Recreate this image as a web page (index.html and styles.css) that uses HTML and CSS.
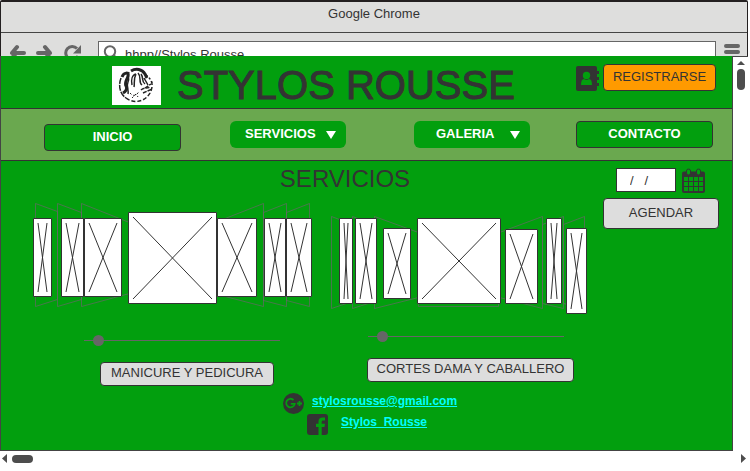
FILE: index.html
```html
<!DOCTYPE html>
<html lang="es">
<head>
<meta charset="utf-8">
<title>Stylos Rousse</title>
<link rel="stylesheet" href="styles.css">
</head>
<body>
<div class="window">
  <div class="chrome">
    <div class="titlebar">Google Chrome</div>
    <div class="toolbar">
      <button class="tool" aria-label="Atrás"><svg width="18" height="18" viewBox="0 0 18 18"><path d="M8 3 3 9l5 6M3 9h12" class="arrow"/></svg></button>
      <button class="tool" aria-label="Adelante"><svg width="18" height="18" viewBox="0 0 18 18"><path d="m10 3 5 6-5 6M15 9H3" class="arrow"/></svg></button>
      <button class="tool reload" aria-label="Recargar"><svg width="18" height="18" viewBox="0 0 18 18"><path d="M13 4.500A6.500 6.500 0 1 0 14 12" class="ring"/><path d="M17 1v8.500H9z" fill="#666"/></svg></button>
      <label class="address">
        <svg width="16" height="18" viewBox="0 0 16 18"><circle cx="7" cy="6.500" r="5.200" fill="none" stroke="#666" stroke-width="2"/><path d="m10.500 10.500 4 5" stroke="#666" stroke-width="3"/></svg>
        <input type="text" value="hhpp//Stylos Rousse" aria-label="Dirección">
      </label>
      <button class="tool menu" aria-label="Menú"><svg width="16" height="18" viewBox="0 0 16 18"><path d="M2 3h12M2 9h12M2 15h12" class="arrow"/></svg></button>
    </div>
  </div>

  <div class="viewport">
    <div class="page">
      <header class="header">
        <svg class="logo" width="49" height="39" viewBox="0 0 49 39" aria-hidden="true">
          <rect width="49" height="39" fill="#fff"/>
          <g fill="none" stroke="#222" stroke-width="1.500">
            <path d="M19 5c5-3 11-2 14 3l2 4" stroke-width="3"/>
            <path d="M10 11c2-5 7-5 6-1s-4 7-2 10-1 6-3 7" stroke-width="3"/>
            <path d="M17 6c-2 4 1 6-1 10s1 8 0 12M20 19c-1-5 0-10 4-11M24 8c-3 6-1 9-2 13M26 7c4 4 0 9 4 12M29 8c3 4 0 7 4 10M32 12l4 7"/>
            <path d="M9 12c-3 8-1 16 5 20" stroke-dasharray="6 1"/>
            <path d="M14 32c8 6 19 4 24-5 2-4 3-8 1-13" stroke-dasharray="4 2"/>
            <path d="M34 9c3 2 5 5 6 8" stroke-dasharray="2 2"/>
            <path d="M29 24c3-3 6-1 9-3M31 27l9-4M33 22l6-4" stroke-dasharray="4 1"/>
            <path d="M18 27c4 5 8 1 9-2M20 32l4-4 2 3" stroke-width="1" stroke-dasharray="2 2"/>
          </g>
        </svg>
        <h1>STYLOS ROUSSE</h1>
        <svg class="contact-icon" width="23" height="25" viewBox="0 0 23 25" aria-hidden="true">
          <rect width="21" height="25" rx="2" fill="#333"/>
          <path d="M20 5h3v3h-3zm0 6h3v3h-3zm0 6h3v3h-3z" fill="#333"/>
          <circle cx="10.500" cy="9.500" r="3.700" fill="#029f0e"/>
          <path d="M5 19c0-4 1-6 3-6q2.500 2 5 0c2 0 3 2 3 6z" fill="#029f0e"/>
        </svg>
        <button class="btn register">REGISTRARSE</button>
      </header>

      <nav class="nav">
        <a class="nav-item low" href="#">INICIO</a>
        <span class="drop"><select aria-label="Servicios"><option>SERVICIOS</option></select></span>
        <span class="drop second"><select aria-label="Galeria"><option>GALERIA</option></select></span>
        <a class="nav-item" href="#">CONTACTO</a>
      </nav>

      <main class="main">
        <h2>SERVICIOS</h2>
        <section class="service">
          <svg width="280" height="106" viewBox="0 0 280 106" role="img" aria-label="Manicure y pedicura">
            <path class="ghost" d="M2.500 1.500 24.500 9.500V97.500L2.500 104.500zM24.500 1.500 48.500 10.500V97.500L24.500 104.500zM48.500 1.500 96.500 20.500V91.500L48.500 104.500zM184.500 19.500 230.500 1.500V104.500L184.500 92.500zM230.500 10.500 253.500 1.500V104.500L230.500 98.500zM253.500 10.500 276.500 1.500V104.500L253.500 98.500z"/>
            <path class="frame" d="M.5 16.500h18v78h-18zM28.500 16.500h22v78h-22zM51.500 16.500h37v78h-37zM184.500 16.500h39v78h-39zM231.500 16.500h21v78h-21zM253.500 16.500h25v78h-25z"/>
            <path class="frame" d="M95.500 10.500h88v91h-88z"/>
            <path class="cross" d="M5 21l9 69m0-69L5 90M33 21l13 69m0-69L33 90M56 21l28 69m0-69L56 90M100 15l79 82m0-82-79 82M189 21l30 69m0-69-30 69M236 21l12 69m0-69-12 69M258 21l16 69m0-69-16 69"/>
          </svg>
          <input class="slider" type="range" min="0" max="100" value="5" aria-label="Manicure y pedicura">
          <button class="btn light manicure">MANICURE Y PEDICURA</button>
        </section>
        <section class="service cuts">
          <svg width="257" height="114" viewBox="0 0 257 114" role="img" aria-label="Cortes dama y caballero">
            <path class="ghost" d="M.5 14.500 21.500 22.500V99.500L.5 106.500zM21.500 14.500 43.500 22.500V99.500L21.500 106.500zM43.500 14.500 87.500 30.500V95.500L43.500 106.500zM87.500 20.500h80v84h-80zM168.500 30.500 211.500 14.500V106.500L168.500 95.500zM211.500 22.500 232.500 14.500V106.500L211.500 101.500zM232.500 22.500 253.500 14.500V106.500L232.500 101.500z"/>
            <path class="frame" d="M8.500 16.500h13v85h-13zM24.500 16.500h21v85h-21zM52.500 26.500h27v70h-27zM86.500 16.500h83v85h-83zM174.500 27.500h32v74h-32zM215.500 16.500h15v85h-15zM235.500 26.500h20v85h-20z"/>
            <path class="cross" d="M13 21l4 76m0-76-4 76M29 21l12 76m0-76L29 97M57 31l18 61m0-61L57 92M91 21l74 76m0-76L91 97M179 32l23 65m0-65-23 65M220 21l6 76m0-76-6 76M240 31l11 76m0-76-11 76"/>
          </svg>
          <input class="slider" type="range" min="0" max="100" value="5" aria-label="Cortes dama y caballero">
          <button class="btn light haircut">CORTES DAMA Y CABALLERO</button>
        </section>
        <form class="booking">
          <div class="date">
            <input type="text" value="/&nbsp;&nbsp;&nbsp;/" aria-label="Fecha">
            <svg width="23" height="25" viewBox="0 0 23 25" aria-hidden="true">
              <rect x="1" y="4.500" width="21" height="19.500" rx="1" fill="none" stroke="#333" stroke-width="2"/>
              <path d="M1 4h21v5H1z" fill="#333"/>
              <path d="M1 13.500h21M1 18.500h21M6.500 9v15M11.500 9v15M16.500 9v15" stroke="#333"/>
              <rect x="4.500" y="1" width="4" height="6" rx="2" fill="#029f0e" stroke="#333"/>
              <rect x="14.500" y="1" width="4" height="6" rx="2" fill="#029f0e" stroke="#333"/>
            </svg>
          </div>
          <button class="btn light schedule" type="button">AGENDAR</button>
        </form>
      </main>

      <footer class="footer">
        <div class="contact mail">
          <svg width="21" height="21" viewBox="0 0 21 21" aria-hidden="true"><circle cx="10.500" cy="10.500" r="10.500" fill="#333"/><path d="M10.500 7A4.300 4.300 0 1 0 11.700 10.800H7.800M14 10.500h5M16.500 8v5" fill="none" stroke="#029f0e" stroke-width="1.800"/></svg>
          <a href="#">stylosrousse@gmail.com</a>
        </div>
        <div class="contact social">
          <svg width="21" height="21" viewBox="0 0 21 21" aria-hidden="true"><rect width="21" height="21" rx="3" fill="#333"/><path d="M11.500 21v-8H9v-3.200h2.500V7.500c0-2.600 1.500-4 4-4H18v3h-1.700c-1.300 0-1.600.6-1.600 1.600v1.700H18l-.5 3.200h-2.800v8z" fill="#029f0e"/></svg>
          <a href="#">Stylos&nbsp; Rousse</a>
        </div>
      </footer>
    </div>
    <div class="vscroll">
      <svg width="8" height="4" viewBox="0 0 8 4"><path d="M4 0l4 4H0z" fill="#4d4d4d"/></svg>
      <span class="vthumb"></span>
    </div>
  </div>
  <div class="hscroll">
    <svg width="5" height="9" viewBox="0 0 5 9"><path d="M5 0v9L0 4.500z" fill="#4d4d4d"/></svg>
    <span class="hthumb"></span>
    <svg class="right" width="5" height="9" viewBox="0 0 5 9"><path d="M0 0v9l5-4.500z" fill="#4d4d4d"/></svg>
  </div>
</div>
</body>
</html>
```
FILE: styles.css
```css
* { box-sizing: border-box; }
body {
  margin: 0;
  background: #fff;
  color: #333;
  font: 13px/16px "Liberation Sans", Arial, sans-serif;
}
button, input, select { font: inherit; color: inherit; margin: 0; }
button { cursor: pointer; }
svg { display: block; flex: none; }
.window { margin-right: 2px; }

.chrome {
  height: 56px;
  overflow: hidden;
  border: 1px solid #231f20;
  border-top-width: 2px;
  border-bottom: 0;
  border-radius: 2px 2px 0 0;
  background: #dededd;
}
.titlebar {
  height: 31px;
  padding-top: 4px;
  border-bottom: 1px solid #444;
  text-align: center;
}
.toolbar { display: flex; align-items: flex-start; padding: 8px 7px 0 8px; }
.tool { padding: 3px 0 0; border: 0; background: none; margin-right: 8px; }
.tool.reload { margin: 0 16px 0 3px; }
.tool.menu { margin: 0 0 0 8px; padding-top: 2px; }
.arrow { fill: none; stroke: #666; stroke-width: 4; stroke-linecap: round; stroke-linejoin: round; }
.ring { fill: none; stroke: #666; stroke-width: 3; }
.address {
  flex: 1;
  display: flex;
  height: 28px;
  padding: 3px 4px;
  gap: 6px;
  border: 1px solid #666;
  background: #fff;
}
.address input { flex: 1; height: 18px; padding: 0; border: 0; outline: 0; background: none; }

.viewport { display: flex; }
.page {
  flex: 1;
  background: #029f0e;
  border: 1px solid #444;
  border-top: 0;
}
.header {
  display: flex;
  align-items: flex-start;
  height: 52px;
  padding: 8px 16px 0 111px;
}
.logo, .contact-icon { margin-top: 2px; }
h1 {
  margin: 0 auto 0 16px;
  font-size: 40px;
  line-height: 42px;
  font-weight: 400;
  white-space: nowrap;
  -webkit-text-stroke: 1px #333;
}
.btn {
  border: 1px solid #333;
  border-radius: 4px;
  padding: 0 0 2px;
  text-align: center;
}
.register { width: 113px; height: 27px; margin-left: 4px; background: #ff9a00; }
.light { background: #ddd; }

.nav {
  display: grid;
  grid-template-columns: 186fr 184fr 162fr 137px;
  align-items: start;
  height: 53px;
  padding: 12px 19px 9px 43px;
  border: 1px solid #333;
  border-width: 1px 0;
  background: #6aa84f;
  color: #fff;
  font-weight: 700;
}
.nav-item {
  width: 137px;
  height: 27px;
  padding-top: 4px;
  border: 1px solid #333;
  border-radius: 4px;
  background: #029f0e;
  color: #fff;
  text-align: center;
  text-decoration: none;
}
.low { align-self: end; }
.drop { position: relative; width: 116px; }
.drop::after {
  content: "";
  position: absolute;
  right: 10px;
  top: 10px;
  width: 10px;
  height: 8px;
  background: #fff;
  clip-path: polygon(0 0, 100% 0, 50% 100%);
  pointer-events: none;
}
.drop select {
  display: block;
  appearance: none;
  width: 100%;
  height: 27px;
  padding: 0 24px 2px 15px;
  border: 0;
  border-radius: 6px;
  background: #029f0e;
}
.drop.second select { padding-left: 22px; }

.main {
  display: grid;
  grid-template-columns: 298fr 272fr 116px;
  grid-template-rows: 35px auto;
  padding: 6px 13px 0 32px;
}
h2 {
  grid-column: 1 / 3;
  grid-row: 1;
  margin: 0 0 0 54px;
  font-size: 24px;
  line-height: 24px;
  font-weight: 400;
  text-align: center;
}
.service { grid-row: 2; display: flex; flex-direction: column; align-items: flex-start; }
.ghost { fill: none; stroke: #666; stroke-opacity: .7; }
.frame { fill: #fff; stroke: #333; }
.cross { fill: none; stroke: #333; }
.slider {
  appearance: none;
  width: 196px;
  height: 16px;
  margin: 24px 0 14px 51px;
  background: none;
}
.cuts .slider { margin: 12px 0 14px 37px; }
.slider::-webkit-slider-runnable-track { height: 1px; background: #666; }
.slider::-webkit-slider-thumb {
  appearance: none;
  width: 11px;
  height: 11px;
  margin-top: -5px;
  border-radius: 50%;
  background: #666;
}
.manicure, .haircut { height: 24px; }
.manicure { width: 174px; margin-left: 67px; }
.haircut { width: 207px; margin-left: 36px; }
.booking { grid-column: 3; grid-row: 1 / 3; }
.date { display: flex; gap: 6px; padding: 1px 0 5px 13px; }
.date input { width: 60px; height: 24px; padding: 0 13px; border: 1px solid #333; background: #fff; }
.schedule { width: 100%; height: 31px; }

.footer { padding: 7px 0 15px; font-size: 12px; font-weight: 700; }
.contact { display: flex; }
.mail { padding-left: 282px; gap: 8px; }
.social { padding-left: 306px; gap: 13px; }
.contact a { color: #0ff; }

.vscroll {
  width: 15px;
  padding: 4px 3px 4px 4px;
  border-top: 1px solid #444;
}
.vthumb { display: block; height: 21px; margin-top: 4px; border-radius: 4px; background: #4d4d4d; }
.hscroll { display: flex; align-items: center; gap: 5px; padding: 3px 2px; }
.hthumb { width: 21px; height: 8px; border-radius: 4px; background: #4d4d4d; }
.right { margin-left: auto; }
```
